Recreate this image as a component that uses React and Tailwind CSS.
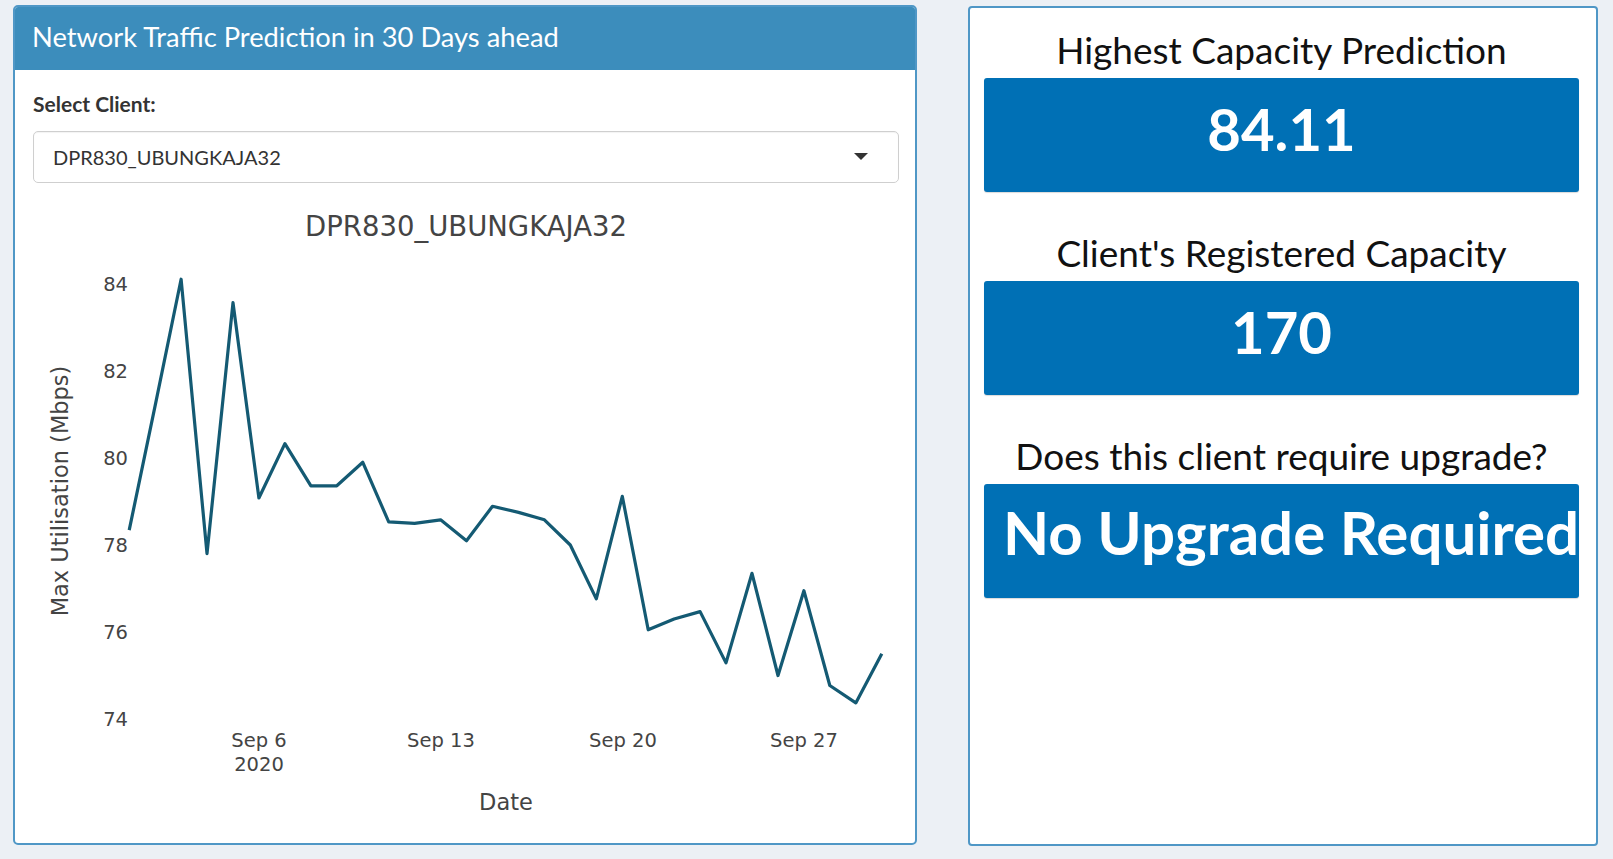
import React from "react";

const values = [
  78.34, 81.2, 84.11, 77.8, 83.57, 79.08, 80.33, 79.36, 79.36, 79.9,
  78.53, 78.5, 78.58, 78.1, 78.89, 78.75, 78.58, 78.0, 76.76, 79.12,
  76.05, 76.3, 76.47, 75.29, 77.35, 75.0, 76.95, 74.77, 74.37, 75.5,
];

const X0 = 33;
const Y0 = 190;
const px = (i) => 129.2 + i * 25.95 - X0;
const py = (v) => 284 + (84 - v) * 43.5 - Y0;

function Chart() {
  const d = values.map((v, i) => `${i === 0 ? "M" : "L"}${px(i).toFixed(1)},${py(v).toFixed(1)}`).join(" ");
  const yTicks = [84, 82, 80, 78, 76, 74];
  const xTicks = [
    { label: "Sep 6", x: 259 },
    { label: "Sep 13", x: 441 },
    { label: "Sep 20", x: 623 },
    { label: "Sep 27", x: 804 },
  ];
  const ff = "'DejaVu Sans', Verdana, sans-serif";
  return (
    <svg width="866" height="650" className="block mt-[7px]">
      <text x={466 - X0} y={236 - Y0} textAnchor="middle" fontFamily={ff} fontSize="27.5" fill="#444">
        DPR830_UBUNGKAJA32
      </text>
      {yTicks.map((t) => (
        <text key={t} x={128 - X0} y={284 + (84 - t) * 43.5 - Y0 + 7} textAnchor="end" fontFamily={ff} fontSize="19.5" fill="#444">
          {t}
        </text>
      ))}
      {xTicks.map((t) => (
        <text key={t.label} x={t.x - X0} y={747 - Y0} textAnchor="middle" fontFamily={ff} fontSize="19.5" fill="#444">
          {t.label}
        </text>
      ))}
      <text x={259 - X0} y={771 - Y0} textAnchor="middle" fontFamily={ff} fontSize="19.5" fill="#444">
        2020
      </text>
      <text x={506 - X0} y={810 - Y0} textAnchor="middle" fontFamily={ff} fontSize="22.5" fill="#444">
        Date
      </text>
      <text transform={`translate(${68 - X0},${491 - Y0}) rotate(-90)`} textAnchor="middle" fontFamily={ff} fontSize="22.5" fill="#444">
        Max Utilisation (Mbps)
      </text>
      <path d={d} fill="none" stroke="#145a73" strokeWidth="3.2" strokeLinejoin="round" />
    </svg>
  );
}

function ValueBox({ children, big }) {
  return (
    <div className={`mt-[6px] h-[114px] rounded-[3px] bg-[#0070b5] flex items-center px-[19px] overflow-visible shadow-[0_1px_1px_rgba(0,0,0,0.15)] ${big ? "justify-start pb-[19px]" : "justify-center pb-[13px]"}`}>
      <span className={`text-white font-bold leading-none whitespace-nowrap ${big ? "text-[60px]" : "text-[58px]"}`}>{children}</span>
    </div>
  );
}

export default function App() {
  return (
    <div className="w-[1613px] h-[859px] bg-[#ecf0f5] flex items-start pt-[5px] pl-[13px] gap-[51px] font-['Lato',sans-serif] overflow-hidden">
      <div className="w-[904px] h-[840px] border-2 border-[#4f97c6] rounded-[5px] bg-white overflow-hidden flex flex-col">
        <div className="h-[63px] bg-[#3c8dbc] flex items-center pl-[17px] pb-[3px]">
          <span className="text-white text-[27.3px] leading-none">Network Traffic Prediction in 30 Days ahead</span>
        </div>
        <div className="pt-[21px] pl-[18px] pr-[16px]">
          <div className="text-[#333] font-bold text-[21px] leading-[26px]">Select Client:</div>
          <div className="mt-[14px] h-[52px] border border-[#cfcfcf] rounded-[5px] flex items-center justify-between pl-[19px] pr-[30px] shadow-[inset_0_1px_1px_rgba(0,0,0,0.05)]">
            <span className="text-[#333] text-[20px]">DPR830_UBUNGKAJA32</span>
            <svg width="14" height="8" viewBox="0 0 14 8">
              <path d="M0 0 L14 0 L7 7 Z" fill="#333" />
            </svg>
          </div>
          <Chart />
        </div>
      </div>
      <div className="mt-[1px] w-[630px] h-[840px] border-2 border-[#4f97c6] rounded-[4px] bg-white pt-[20px] pl-[14px] pr-[17px]">
        <div className="text-center text-[37px] leading-[44px] text-[#111]">Highest Capacity Prediction</div>
        <ValueBox>84.11</ValueBox>
        <div className="mt-[39px] text-center text-[37px] leading-[44px] text-[#111]">Client's Registered Capacity</div>
        <ValueBox>170</ValueBox>
        <div className="mt-[39px] text-center text-[37px] leading-[44px] text-[#111]">Does this client require upgrade?</div>
        <ValueBox big>No Upgrade Required</ValueBox>
      </div>
    </div>
  );
}
